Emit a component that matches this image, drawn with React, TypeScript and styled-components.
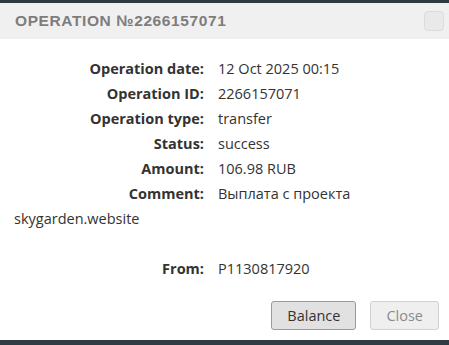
import React from 'react';
import styled, { createGlobalStyle } from 'styled-components';

const GlobalStyle = createGlobalStyle`
  html, body {
    margin: 0;
    padding: 0;
    background: #2f3a41;
  }
  body {
    font-family: 'Open Sans', 'DejaVu Sans', sans-serif;
  }
`;

const Modal = styled.div`
  width: 449px;
  height: 345px;
  display: flex;
  flex-direction: column;
  border-top: 3px solid #2f3a41;
  border-bottom: 5px solid #2f3a41;
  box-sizing: border-box;
  background: #fff;
`;

const Header = styled.div`
  height: 36px;
  background: #f0f0f0;
  display: flex;
  align-items: center;
  justify-content: space-between;
  padding: 0 5px 0 15px;
`;

const Title = styled.h1`
  margin: 0;
  font-family: 'Liberation Sans', Arial, sans-serif;
  font-size: 15.5px;
  font-weight: bold;
  letter-spacing: 0.6px;
  color: #7d7d7d;
  text-transform: uppercase;
`;

const CloseBox = styled.button`
  width: 20px;
  height: 20px;
  padding: 0;
  border: 1px solid #dcdcdc;
  border-radius: 4px;
  background: #e9e9e9;
`;

const Body = styled.div`
  flex: 1;
  padding-top: 17px;
`;

const Details = styled.div`
  display: grid;
  grid-template-columns: 204px 1fr;
  column-gap: 14px;
  grid-auto-rows: 25px;
  align-items: center;
  font-size: 14.5px;
  color: #333;
`;

const Label = styled.div`
  text-align: right;
  font-weight: bold;
  color: #333;
`;

const Value = styled.div`
  color: #333;
`;

const Overflow = styled.div`
  grid-column: 1 / -1;
  padding-left: 14px;
  color: #333;
`;

const Footer = styled.div`
  display: flex;
  justify-content: flex-end;
  gap: 14px;
  padding: 0 10px 10px 0;
`;

const Button = styled.button<{ $primary?: boolean }>`
  height: 29px;
  padding: 0 15px;
  font-family: 'Open Sans', 'DejaVu Sans', sans-serif;
  font-size: 14.5px;
  border-radius: 3px;
  border: 1px solid ${(p) => (p.$primary ? '#9a9a9a' : '#d0d0d0')};
  background: ${(p) => (p.$primary ? '#e1e1e1' : '#efefef')};
  color: ${(p) => (p.$primary ? '#333' : '#8a8a8a')};
`;

const rows = [
  ['Operation date:', '12 Oct 2025 00:15'],
  ['Operation ID:', '2266157071'],
  ['Operation type:', 'transfer'],
  ['Status:', 'success'],
  ['Amount:', '106.98 RUB'],
  ['Comment:', 'Выплата с проекта'],
];

const App = () => {
  return (
    <>
      <GlobalStyle />
      <Modal>
        <Header>
          <Title>Operation №2266157071</Title>
          <CloseBox aria-label='close' />
        </Header>
        <Body>
          <Details>
            {rows.map(([label, value]) => (
              <React.Fragment key={label}>
                <Label>{label}</Label>
                <Value>{value}</Value>
              </React.Fragment>
            ))}
            <Overflow>skygarden.website</Overflow>
            <Overflow />
            <Label>From:</Label>
            <Value>P1130817920</Value>
          </Details>
        </Body>
        <Footer>
          <Button $primary>Balance</Button>
          <Button>Close</Button>
        </Footer>
      </Modal>
    </>
  );
};

export default App;
